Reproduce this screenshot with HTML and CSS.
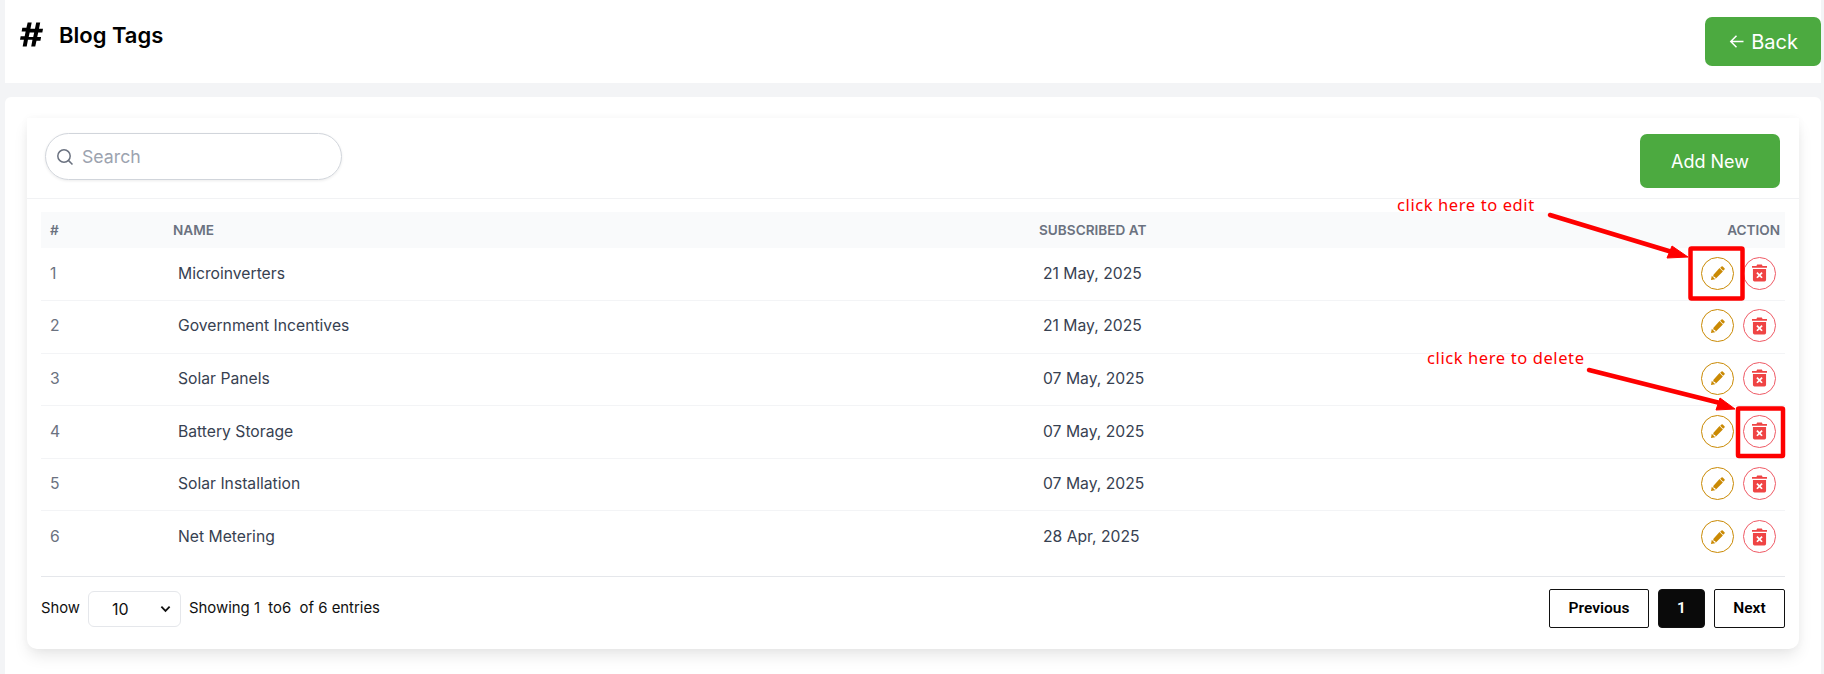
FILE: index.html
```html
<!DOCTYPE html>
<html lang="en">
<head>
<meta charset="utf-8">
<title>Blog Tags</title>
<link rel="stylesheet" href="styles.css">
</head>
<body>
<svg class="defs" width="0" height="0" aria-hidden="true">
  <symbol id="pencil" viewBox="0 0 16 16">
    <path d="M12 .6a1 1 0 0 1 1.400 0l2 2a1 1 0 0 1 0 1.400l-1.500 1.500-3.400-3.400zM9.700 2.400l3.900 3.900-8.300 8.300-.5-2.100-2-.1-.2-2zM.9 11.200l3.900 3.900-4.800 .9z"/>
  </symbol>
  <symbol id="trash" viewBox="0 0 16 18">
    <path fill-rule="evenodd" d="M5.500 0h5l.8 1.400H16v2H0v-2h4.700zM1 4.600h14V16.300A1.700 1.700 0 0 1 13.300 18H2.700A1.700 1.700 0 0 1 1 16.300zM5.900 7.900 4.600 9.200 6.700 11.300 4.600 13.400 5.900 14.700 8 12.600 10.100 14.700 11.400 13.400 9.300 11.300 11.400 9.200 10.100 7.900 8 10z"/>
  </symbol>
</svg>

<div class="page">
  <header class="topbar">
    <div class="title">
      <svg class="hash" viewBox="0 0 24 25"><path d="M8 0h4.200l-1.300 6.400h4.700L16.900 0h4.200l-1.300 6.400H24l-.7 3.900h-4.300l-1 4.900H22l-.7 3.900h-4.100L15.900 25h-4.200l1.300-6.900H8.300L7 25H2.800l1.300-6.900H0l.7-3.900h4.200l1-4.900H1.700l.7-3.900h4.300zM10.100 10.300l-1 4.900h4.700l1-4.900z"/></svg>
      <h1>Blog Tags</h1>
    </div>
    <a class="btn back"><svg class="arrow" viewBox="0 0 16 16"><path d="M14.500 8H2M7.500 2.200 1.800 8l5.700 5.800"/></svg>Back</a>
  </header>

  <main class="outer">
    <section class="inner">
      <div class="tools">
        <label class="search">
          <svg viewBox="0 0 18 18"><circle cx="8" cy="8" r="6.200"/><path d="M12.600 12.600 16.500 16.500"/></svg>
          <span>Search</span>
        </label>
        <a class="btn add">Add New</a>
      </div>

      <div class="table-wrap">
        <table>
          <colgroup><col class="c1"><col class="c2"><col class="c3"><col class="c4"></colgroup>
          <thead>
            <tr><th>#</th><th>NAME</th><th>SUBSCRIBED AT</th><th class="right">ACTION</th></tr>
          </thead>
          <tbody>
            <tr><td class="num">1</td><td class="nm">Microinverters</td><td class="dt">21 May, 2025</td><td><div class="acts"><span class="ic edit"><svg><use href="#pencil"/></svg></span><span class="ic del"><svg><use href="#trash"/></svg></span></div></td></tr>
            <tr><td class="num">2</td><td class="nm">Government Incentives</td><td class="dt">21 May, 2025</td><td><div class="acts"><span class="ic edit"><svg><use href="#pencil"/></svg></span><span class="ic del"><svg><use href="#trash"/></svg></span></div></td></tr>
            <tr><td class="num">3</td><td class="nm">Solar Panels</td><td class="dt">07 May, 2025</td><td><div class="acts"><span class="ic edit"><svg><use href="#pencil"/></svg></span><span class="ic del"><svg><use href="#trash"/></svg></span></div></td></tr>
            <tr><td class="num">4</td><td class="nm">Battery Storage</td><td class="dt">07 May, 2025</td><td><div class="acts"><span class="ic edit"><svg><use href="#pencil"/></svg></span><span class="ic del"><svg><use href="#trash"/></svg></span></div></td></tr>
            <tr><td class="num">5</td><td class="nm">Solar Installation</td><td class="dt">07 May, 2025</td><td><div class="acts"><span class="ic edit"><svg><use href="#pencil"/></svg></span><span class="ic del"><svg><use href="#trash"/></svg></span></div></td></tr>
            <tr><td class="num">6</td><td class="nm">Net Metering</td><td class="dt">28 Apr, 2025</td><td><div class="acts"><span class="ic edit"><svg><use href="#pencil"/></svg></span><span class="ic del"><svg><use href="#trash"/></svg></span></div></td></tr>
          </tbody>
        </table>
      </div>

      <footer class="foot">
        <div class="info">
          <span>Show</span>
          <div class="select"><span>10</span><svg viewBox="0 0 12 8"><path d="M1.500 1.500 6 6l4.500-4.500"/></svg></div>
          <span class="entries">Showing 1&nbsp; to6&nbsp; of 6 entries</span>
        </div>
        <nav class="pager">
          <a class="pg prev">Previous</a>
          <a class="pg cur">1</a>
          <a class="pg next">Next</a>
        </nav>
      </footer>
    </section>
  </main>
</div>

<svg class="marks" viewBox="0 0 1824 674" aria-hidden="true">
  <rect class="box" x="1690.500" y="248.500" width="52" height="50" rx="1"/>
  <rect class="box" x="1738" y="408.500" width="45" height="47.500" rx="1"/>
  <path class="shaft" d="M1550 215 1672 252"/>
  <path class="head" d="M1688 257 1667 258 1672 246z"/>
  <path class="shaft" d="M1589 370 1720 403"/>
  <path class="head" d="M1735 409 1716 410 1720 398z"/>
</svg>
<span class="note note-edit">click here to edit</span>
<span class="note note-del">click here to delete</span>
</body>
</html>
```
FILE: styles.css
```css
* { box-sizing: border-box; }
html, body { margin: 0; height: 674px; overflow: hidden; }
body {
  background: #f3f4f6;
  font-family: Inter, "Liberation Sans", sans-serif;
  position: relative;
}
.defs { position: absolute; }
.page { display: flex; flex-direction: column; gap: 14px; height: 674px; padding: 0 3px 0 5px; }

.topbar {
  height: 83px;
  background: #fff;
  display: flex;
  justify-content: space-between;
  align-items: flex-start;
  padding: 17px 0 0 15px;
}
.title { display: flex; align-items: flex-start; gap: 16px; padding-top: 5px; }
.hash { width: 23px; height: 25px; fill: #000; }
h1 { margin: 0; font-size: 22px; line-height: 26px; font-weight: 600; color: #000; }

.btn {
  background: #4caa40;
  color: #fff;
  display: flex;
  align-items: center;
  justify-content: center;
  border-radius: 7px;
}
.back { width: 116px; height: 49px; font-size: 20px; gap: 6px; padding-left: 1px; }
.arrow { width: 16px; height: 17px; fill: none; stroke: #fff; stroke-width: 1.500; }
.add { width: 140px; height: 54px; font-size: 18px; font-weight: 400; }

.outer {
  flex: 1;
  background: #fff;
  border-radius: 6px 6px 0 0;
  padding: 21px 22px 0;
}
.inner {
  height: 531px;
  background: #fff;
  border-radius: 0 0 10px 10px;
  box-shadow: 0 8px 16px -2px rgba(0, 0, 0, .1), 0 0 10px rgba(0, 0, 0, .03);
  display: flex;
  flex-direction: column;
}
.tools {
  height: 81px;
  border-bottom: 1px solid #f1f2f4;
  display: flex;
  justify-content: space-between;
  align-items: flex-start;
  padding: 15px 19px 0 18px;
}
.search {
  width: 297px;
  height: 47px;
  border: 1px solid #d1d5db;
  border-radius: 24px;
  box-shadow: 0 1px 3px rgba(0, 0, 0, .08);
  display: flex;
  align-items: center;
  gap: 8px;
  padding-left: 10px;
  color: #9ca3af;
  font-size: 17.700px;
}
.search svg { width: 18px; height: 18px; fill: none; stroke: #6b7280; stroke-width: 1.500; }
.add { margin-top: 1px; }

.table-wrap { padding: 13px 14px 12px; }
table { width: 1744px; border-collapse: collapse; table-layout: fixed; }
.c1 { width: 123px; }
.c2 { width: 866px; }
.c3 { width: 500px; }
.c4 { width: 255px; }
th {
  height: 36px;
  background: #f9fafb;
  color: #6b7280;
  font-size: 13.600px;
  font-weight: 600;
  text-align: left;
  padding: 0 9px;
}
th.right { text-align: right; padding-right: 5px; }
td {
  height: 52.600px;
  font-size: 15.700px;
  color: #374151;
  padding: 0 9px 2px;
  border-bottom: 1px solid #f3f4f6;
}
tr:last-child td { border-bottom: 0; }
.num { color: #6b7280; }
.nm { padding-left: 14px; }
.dt { padding-left: 13px; }
.acts { display: flex; justify-content: flex-end; align-items: center; gap: 9px; }
.ic {
  width: 33px;
  height: 33px;
  border-radius: 50%;
  display: flex;
  align-items: center;
  justify-content: center;
}
.edit { border: 1px solid #ca8a04; }
.edit svg { width: 14px; height: 14px; fill: #ca8a04; }
.del { border: 1px solid #ef5a65; }
.del svg { width: 15px; height: 18px; fill: #ef4444; }

.foot {
  margin: 0 14px;
  border-top: 1px solid #e5e7eb;
  display: flex;
  justify-content: space-between;
  align-items: flex-start;
  padding-top: 12px;
}
.info { display: flex; align-items: center; gap: 8px; height: 38px; font-size: 14.800px; color: #111; }
.entries { font-size: 14.900px; }
.select {
  width: 93px;
  height: 36px;
  border: 1px solid #e5e7eb;
  border-radius: 6px;
  display: flex;
  align-items: center;
  justify-content: space-between;
  padding: 0 9px 0 23px;
  font-size: 16px;
  margin-top: 2px;
}
.select svg { width: 11px; height: 8px; fill: none; stroke: #111; stroke-width: 2; }
.pager { display: flex; gap: 9px; }
.pg {
  height: 39px;
  display: flex;
  align-items: center;
  justify-content: center;
  font-family: Roboto, sans-serif;
  font-size: 15.500px;
  font-weight: 600;
  color: #000;
  border: 1px solid #111;
  border-radius: 2px;
}
.prev { width: 100px; }
.cur { width: 47px; background: #0a0a0a; color: #fff; border-radius: 4px; }
.next { width: 71px; }

.marks { position: absolute; left: 0; top: 0; width: 1824px; height: 674px; pointer-events: none; }
.box { fill: none; stroke: #fe0000; stroke-width: 4.500; }
.shaft { fill: none; stroke: #fe0000; stroke-width: 4.500; stroke-linecap: round; }
.head { fill: #fe0000; stroke: #fe0000; stroke-width: 1; }
.note {
  position: absolute;
  font-family: "Noto Sans", sans-serif;
  font-size: 16.500px;
  line-height: 20px;
  color: #fe0000;
  white-space: nowrap;
  letter-spacing: .6px;
}
.note-edit { left: 1397px; top: 195px; }
.note-del { left: 1427px; top: 348px; }
```
